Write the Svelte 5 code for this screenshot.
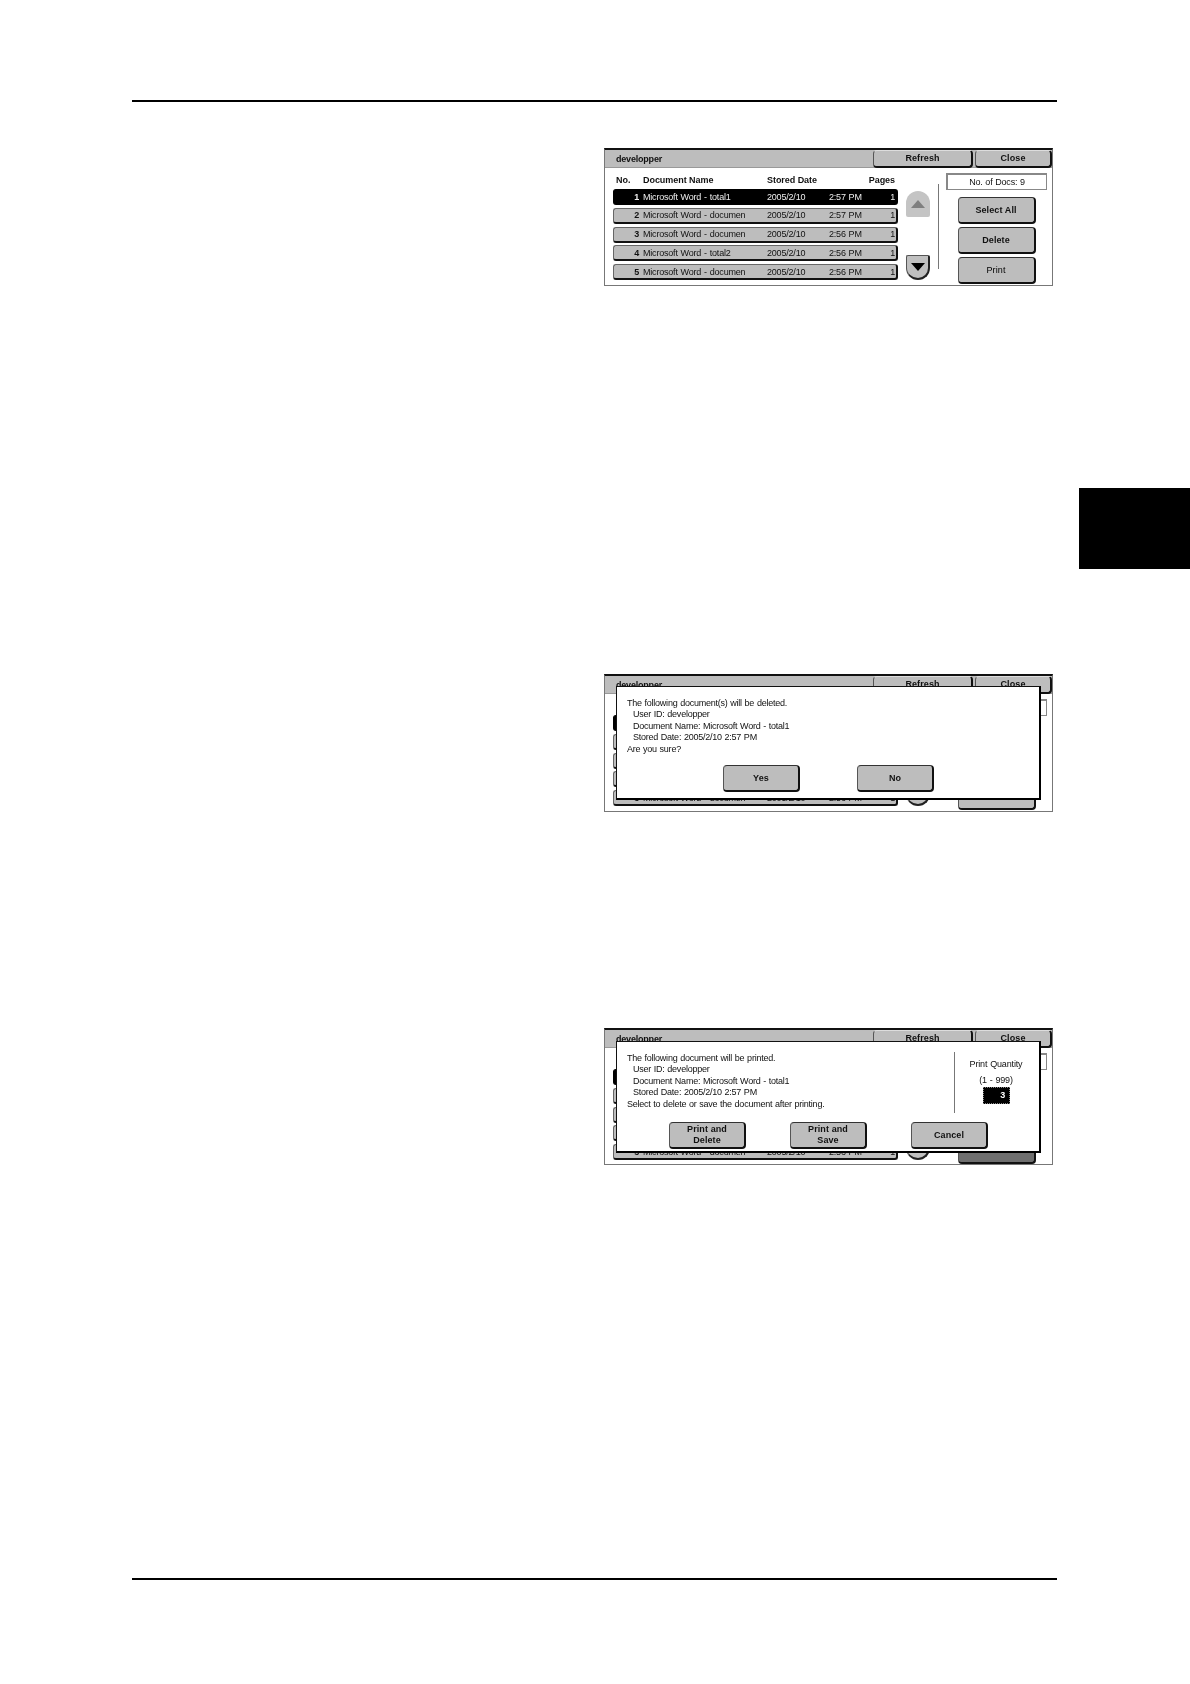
<script lang="ts">
  const rows = [
    { no: 1, name: "Microsoft Word - total1", time: "2:57 PM" },
    { no: 2, name: "Microsoft Word - documen", time: "2:57 PM" },
    { no: 3, name: "Microsoft Word - documen", time: "2:56 PM" },
    { no: 4, name: "Microsoft Word - total2", time: "2:56 PM" },
    { no: 5, name: "Microsoft Word - documen", time: "2:56 PM" },
  ];
</script>

{#snippet panel(printActive: boolean)}
  <div class="titlebar">
    <span class="owner">developper</span>
    <button class="tbtn refresh">Refresh</button>
    <button class="tbtn close">Close</button>
  </div>
  <div class="body">
    <div class="list">
      <div class="list-head">
        <span class="head-no">No.</span>
        <span>Document Name</span>
        <span>Stored Date</span>
        <span class="head-pages">Pages</span>
      </div>
      {#each rows as row, i}
        <div class="row" class:selected={i === 0}>
          <span class="num">{row.no}</span>
          <span>{row.name}</span>
          <span class="date">2005/2/10</span>
          <span class="time">{row.time}</span>
          <span class="pages">1</span>
        </div>
      {/each}
    </div>
    <div class="scroll">
      <div class="arrow up">
        <svg width="14" height="8" viewBox="0 0 14 8"><polygon points="7,0 14,8 0,8" fill="#7f7f7f" /></svg>
      </div>
      <div class="arrow down">
        <svg width="14" height="8" viewBox="0 0 14 8"><polygon points="0,0 14,0 7,8" fill="#000" /></svg>
      </div>
    </div>
    <div class="vline"></div>
    <div class="side">
      <div class="count">No. of Docs: 9</div>
      <button class="btn">Select All</button>
      <button class="btn">Delete</button>
      <button class="btn print" class:active={printActive}>Print</button>
    </div>
  </div>
{/snippet}

<div class="page">
  <div class="rule"></div>
  <div class="tab"></div>

  <section class="panel first">
    {@render panel(false)}
  </section>

  <section class="panel second">
    {@render panel(false)}
    <div class="dialog delete-dialog">
      <div class="msg">
        <div>The following document(s) will be deleted.</div>
        <div class="indent">User ID: developper</div>
        <div class="indent">Document Name: Microsoft Word - total1</div>
        <div class="indent">Stored Date: 2005/2/10 2:57 PM</div>
        <div>Are you sure?</div>
      </div>
      <div class="actions delete-actions">
        <button class="btn big">Yes</button>
        <button class="btn big">No</button>
      </div>
    </div>
  </section>

  <section class="panel third">
    {@render panel(true)}
    <div class="dialog print-dialog">
      <div class="print-top">
        <div class="msg">
          <div>The following document will be printed.</div>
          <div class="indent">User ID: developper</div>
          <div class="indent">Document Name: Microsoft Word - total1</div>
          <div class="indent">Stored Date: 2005/2/10 2:57 PM</div>
          <div>Select to delete or save the document after printing.</div>
        </div>
        <div class="qty">
          <div class="qty-label">Print Quantity</div>
          <div class="qty-range">(1 - 999)</div>
          <div class="qty-value">3</div>
        </div>
      </div>
      <div class="actions print-actions">
        <button class="btn big">Print and<br />Delete</button>
        <button class="btn big">Print and<br />Save</button>
        <button class="btn big">Cancel</button>
      </div>
    </div>
  </section>

  <div class="rule bottom"></div>
</div>

<style>
  :global(body) {
    margin: 0;
    background: #fff;
  }

  .page {
    position: relative;
    width: 1190px;
    height: 1684px;
    padding-top: 100px;
    box-sizing: border-box;
    overflow: hidden;
    font-family: "Liberation Sans", Arial, sans-serif;
    font-size: 9px;
    color: #111;
  }

  .rule {
    height: 1.5px;
    margin: 0 133px 0 132px;
    background: #000;
  }
  .rule.bottom {
    margin-top: 413px;
  }

  .tab {
    position: absolute;
    right: 0;
    top: 488px;
    width: 111px;
    height: 81px;
    background: #000;
  }

  .panel {
    position: relative;
    width: 449px;
    height: 138px;
    margin-left: 604px;
    box-sizing: border-box;
    border: 1px solid #777;
    border-top: 2px solid #111;
    filter: blur(0.35px);
  }
  .first {
    margin-top: 46.5px;
  }
  .second {
    margin-top: 388px;
  }
  .third {
    margin-top: 216px;
    height: 137px;
  }

  button {
    font-family: inherit;
    color: inherit;
    padding: 0;
    margin: 0;
  }

  .titlebar {
    display: flex;
    height: 17px;
    background: #bdbdbd;
    border-bottom: 1px solid #999;
    box-sizing: content-box;
  }
  .owner {
    flex: 1;
    padding-left: 11px;
    font-weight: bold;
    font-size: 9px;
    line-height: 19px;
    letter-spacing: -0.2px;
  }
  .tbtn {
    box-sizing: border-box;
    height: 18px;
    padding-bottom: 1px;
    background: #bdbdbd;
    font-size: 9px;
    font-weight: bold;
    letter-spacing: 0.1px;
    border: 1px solid #555;
    border-top-color: #ddd;
    border-right: 2px solid #111;
    border-bottom: 2px solid #111;
    border-radius: 4px;
  }
  .refresh {
    width: 100px;
  }
  .close {
    width: 77px;
    margin-left: 2px;
  }

  .body {
    display: flex;
  }

  .list {
    width: 285px;
    margin-left: 8px;
  }
  .list-head {
    display: grid;
    grid-template-columns: 30px 124px 1fr auto;
    align-items: center;
    height: 21px;
    padding-top: 2px;
    box-sizing: border-box;
    font-weight: bold;
    letter-spacing: -0.05px;
  }
  .head-no {
    padding-left: 3px;
  }
  .head-pages {
    padding-right: 3px;
  }
  .row {
    display: grid;
    grid-template-columns: 29px 124px 62px 1fr auto;
    align-items: center;
    height: 16px;
    margin-bottom: 2.8px;
    box-sizing: border-box;
    background: #bdbdbd;
    border: 1px solid #666;
    border-right: 2px solid #111;
    border-bottom: 2px solid #111;
    border-radius: 3px;
    padding-right: 1px;
    letter-spacing: -0.2px;
    word-spacing: 0.6px;
    white-space: nowrap;
    line-height: 12px;
  }
  .row.selected {
    background: #000;
    border-color: #000;
    color: #eee;
  }
  .num {
    padding-right: 4px;
    text-align: right;
    font-weight: bold;
  }

  .scroll {
    display: flex;
    flex-direction: column;
    justify-content: space-between;
    width: 24px;
    height: 89px;
    margin: 23px 0 0 8px;
  }
  .arrow {
    display: flex;
    align-items: center;
    justify-content: center;
    box-sizing: border-box;
    width: 24px;
  }
  .up {
    height: 26px;
    background: #c4c4c4;
    border-radius: 12px 12px 2px 2px;
  }
  .down {
    height: 25px;
    background: #c0c0c0;
    border: 1px solid #555;
    border-right: 2px solid #222;
    border-bottom: 2px solid #222;
    border-radius: 2px 2px 12px 12px;
  }

  .vline {
    width: 1px;
    height: 85px;
    margin: 16px 0 0 8px;
    background: #777;
  }

  .side {
    display: flex;
    flex-direction: column;
    align-items: center;
    width: 101px;
    margin: 5px 0 0 7px;
  }
  .count {
    box-sizing: border-box;
    width: 101px;
    height: 17px;
    margin-bottom: 7px;
    border: 1px solid #888;
    border-top-width: 2px;
    border-left-width: 2px;
    background: #fff;
    text-align: center;
    line-height: 15px;
    letter-spacing: -0.2px;
    word-spacing: 0.5px;
  }
  .btn {
    box-sizing: border-box;
    width: 78px;
    height: 27px;
    margin-bottom: 3px;
    background: #bdbdbd;
    border: 1px solid #555;
    border-top-color: #333;
    border-right: 2px solid #111;
    border-bottom: 2px solid #111;
    border-radius: 4px;
    font-size: 9px;
    font-weight: bold;
    letter-spacing: 0.1px;
    line-height: 11px;
  }
  .btn.print {
    font-weight: normal;
    color: #000;
  }
  .btn.active {
    background: #6f6f6f;
  }

  .dialog {
    position: absolute;
    left: 11px;
    width: 425px;
    box-sizing: border-box;
    background: #fff;
    border: 1px solid #111;
    border-right: 2px solid #000;
    border-bottom: 2px solid #000;
  }
  .delete-dialog {
    top: 10px;
    height: 114px;
    padding: 11px 0 0 10px;
  }
  .print-dialog {
    top: 11px;
    height: 112px;
    padding: 11px 0 0 10px;
  }
  .msg {
    line-height: 11.4px;
    letter-spacing: -0.24px;
    word-spacing: 0.5px;
    white-space: nowrap;
  }
  .indent {
    padding-left: 6px;
  }
  .actions {
    display: flex;
  }
  .btn.big {
    width: 77px;
    margin-bottom: 0;
  }
  .delete-actions {
    gap: 57px;
    margin: 10px 0 0 96px;
  }
  .print-top {
    display: flex;
    height: 60px;
  }
  .print-top .msg {
    width: 327px;
  }
  .qty {
    width: 82px;
    margin-top: -1px;
    border-left: 1px solid #777;
    text-align: center;
    padding-left: 1px;
    letter-spacing: -0.15px;
    word-spacing: 0.5px;
    box-sizing: border-box;
  }
  .qty-label {
    margin-top: 7px;
  }
  .qty-range {
    margin-top: 6px;
  }
  .qty-value {
    box-sizing: border-box;
    width: 27px;
    height: 17px;
    margin: 2px 0 0 27px;
    padding-right: 4px;
    background: #000;
    border: 1px dotted #888;
    color: #fff;
    font-weight: bold;
    text-align: right;
    line-height: 14px;
  }
  .print-actions {
    gap: 44px;
    margin: 9px 0 0 42px;
  }
</style>
